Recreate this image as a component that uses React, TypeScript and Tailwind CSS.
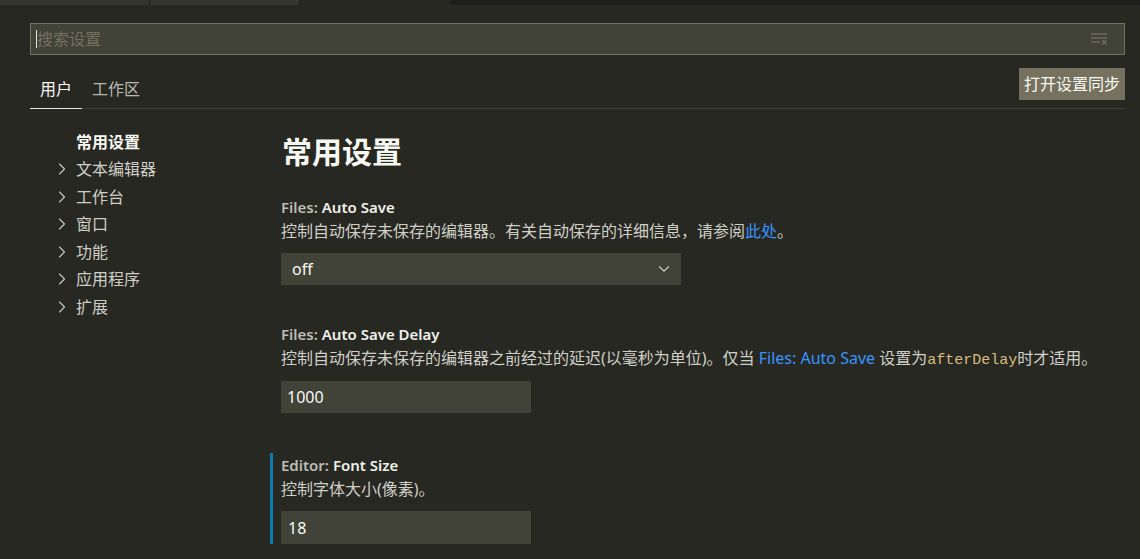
import { ChevronDown, ChevronRight } from "lucide-react";

const font = "font-['Noto_Sans','Noto_Sans_CJK_SC',sans-serif]";

const navItems = ["文本编辑器", "工作台", "窗口", "功能", "应用程序", "扩展"];

function ClearIcon() {
  return (
    <svg width="18" height="14" viewBox="0 0 18 14" fill="none" stroke="#75715e" strokeWidth="1.3">
      <line x1="1" y1="2" x2="17" y2="2" />
      <line x1="1" y1="6" x2="17" y2="6" />
      <line x1="1" y1="10" x2="10" y2="10" />
      <line x1="12" y1="8" x2="16.5" y2="12.5" />
      <line x1="16.5" y1="8" x2="12" y2="12.5" />
    </svg>
  );
}

function Label({ cat, name }: { cat: string; name: string }) {
  return (
    <div className="h-[24px] leading-[24px] text-[15px] font-semibold">
      <span className="text-[#bdbdb5]">{cat} </span>
      <span className="text-[#f0f0ea]">{name}</span>
    </div>
  );
}

export default function App() {
  return (
    <div className={`w-[1140px] h-[559px] overflow-hidden bg-[#272822] ${font}`}>
      {/* editor tabs strip */}
      <div className="flex h-[5px] bg-[#1e1f1c]">
        <div className="w-[150px] bg-[#34352f] border-r border-[#1e1f1c]" />
        <div className="w-[150px] bg-[#34352f] border-r border-[#1e1f1c]" />
        <div className="w-[150px] bg-[#272822]" />
      </div>

      <div className="pl-[30px] pr-[15px]">
        {/* search */}
        <div className="mt-[18px] h-[32px] flex items-center border border-[#75715e] bg-[#414339] pl-[5px] pr-[16px]">
          <div className="w-px h-[18px] bg-[#e0e0e0]" />
          <span className="flex-1 text-[16px] text-[#75715e]">搜索设置</span>
          <ClearIcon />
        </div>

        {/* tabs */}
        <div className="mt-[13px] flex justify-between items-start border-b border-[#3e3d32]">
          <div className="flex">
            <div className="-mb-px px-[10px] pt-[10px] pb-[8px] border-b border-[#e7e7e7] text-[16px] leading-[22px] text-[#f8f8f2]">
              用户
            </div>
            <div className="-mb-px px-[10px] pt-[10px] pb-[8px] border-b border-transparent text-[16px] leading-[22px] text-[#b8b8b0]">
              工作区
            </div>
          </div>
          <div className="h-[32px] px-[5px] flex items-center bg-[#75715e] text-[16px] text-[#f8f8f2]">
            打开设置同步
          </div>
        </div>

        <div className="flex">
          {/* table of contents */}
          <div className="w-[240px] pt-[19px]">
            <div className="h-[27.5px] flex items-center pl-[46px] text-[16px] font-bold text-[#f8f8f2]">
              常用设置
            </div>
            {navItems.map((n) => (
              <div key={n} className="h-[27.5px] flex items-center pl-[22px] text-[16px] text-[#cfcfc7]">
                <ChevronRight size={20} strokeWidth={1.3} className="text-[#c8c8c0] mr-[4px]" />
                {n}
              </div>
            ))}
          </div>

          {/* settings list */}
          <div className="flex-1 pt-[23px]">
            <div className="pl-[12px] h-[40px] leading-[40px] text-[30px] font-bold text-[#f8f8f2]">常用设置</div>

            <div className="mt-[23px] pl-[8px] border-l-[3px] border-transparent">
              <Label cat="Files:" name="Auto Save" />
              <div className="h-[24px] leading-[24px] text-[16px] text-[#cfcfc7]">
                控制自动保存未保存的编辑器。有关自动保存的详细信息，请参阅<span className="text-[#3794ff]">此处</span>。
              </div>
              <div className="mt-[10px] w-[400px] h-[32px] flex items-center justify-between bg-[#414339] pl-[11px] pr-[8px] text-[16px] text-[#f8f8f2]">
                off
                <ChevronDown size={18} strokeWidth={1.5} className="text-[#c8c8c0]" />
              </div>
            </div>

            <div className="mt-[37px] pl-[8px] border-l-[3px] border-transparent">
              <Label cat="Files:" name="Auto Save Delay" />
              <div className="h-[24px] leading-[24px] text-[16px] text-[#cfcfc7] whitespace-nowrap">
                控制自动保存未保存的编辑器之前经过的延迟(以毫秒为单位)。仅当 <span className="text-[#3794ff]">Files: Auto Save</span> 设置为
                <span className="font-['Liberation_Mono',monospace] text-[15px] text-[#d7ba7d]">afterDelay</span>时才适用。
              </div>
              <div className="mt-[11px] w-[250px] h-[32px] flex items-center bg-[#414339] pl-[6px] text-[16px] text-[#f8f8f2]">
                1000
              </div>
            </div>

            <div className="mt-[40px] pl-[8px] border-l-[3px] border-[#0f7bb0]">
              <Label cat="Editor:" name="Font Size" />
              <div className="h-[24px] leading-[24px] text-[16px] text-[#cfcfc7]">控制字体大小(像素)。</div>
              <div className="mt-[10px] w-[250px] h-[33px] flex items-center bg-[#414339] pl-[7px] text-[16px] text-[#f8f8f2]">
                18
              </div>
            </div>
          </div>
        </div>
      </div>
    </div>
  );
}
